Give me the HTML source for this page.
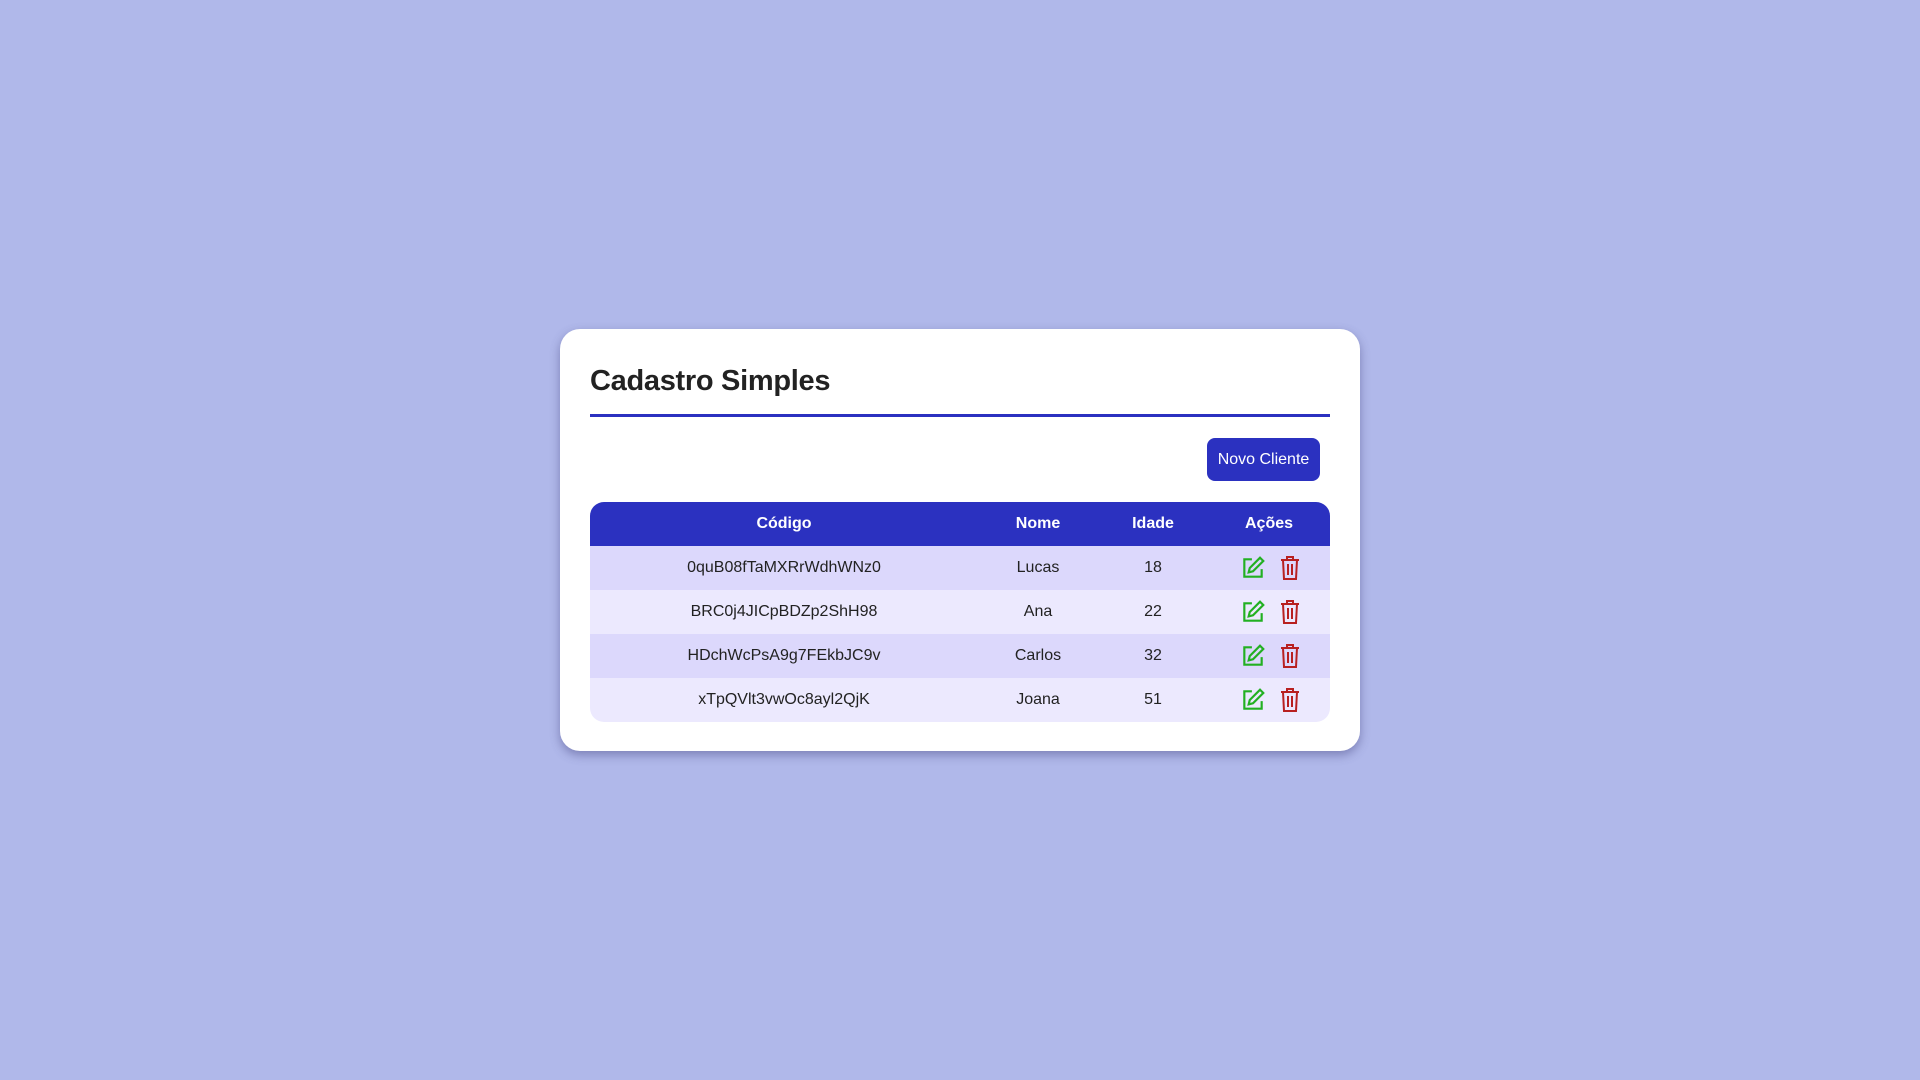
<!DOCTYPE html>
<html><head><meta charset="utf-8"><style>
html,body{margin:0;height:100%;}
body{background:#b0b8ea;font-family:"Liberation Sans",sans-serif;width:1920px;height:1080px;position:relative;overflow:hidden;}
.card{position:absolute;left:560px;top:329px;width:800px;height:422px;background:#fff;border-radius:20px;box-shadow:0 4px 10px rgba(60,60,120,.45);box-sizing:border-box;padding:0 30px;}
h1{margin:0;position:absolute;left:30px;top:36px;font-size:29px;font-weight:bold;color:#222;letter-spacing:-0.3px;}
.line{position:absolute;left:30px;right:30px;top:85px;height:3px;background:#2b31c0;}
.btn{position:absolute;right:40px;top:109px;width:113px;height:43px;background:#2b31c0;color:#fff;border-radius:8px;font-size:16px;display:flex;align-items:center;justify-content:center;}
table{position:absolute;left:30px;top:173px;width:740px;border-collapse:collapse;border-radius:14px;overflow:hidden;}
th{background:#2b31c0;color:#fff;font-size:16px;font-weight:bold;height:44px;padding:0;}
td{height:44px;text-align:center;font-size:16px;color:#222;padding:0;}
tr.o td{background:#dcd8fc;}tr.e td{background:#ece9fe;}
td.a{padding-left:4px;}
svg{vertical-align:middle;}
</style></head><body>
<div class="card">
<h1>Cadastro Simples</h1>
<div class="line"></div>
<div class="btn">Novo Cliente</div>
<table>
<tr><th style="width:388px">Código</th><th style="width:120px">Nome</th><th style="width:110px">Idade</th><th style="width:122px">Ações</th></tr>
<tr class="o"><td>0quB08fTaMXRrWdhWNz0</td><td>Lucas</td><td>18</td><td class="a">ICONS</td></tr>
<tr class="e"><td>BRC0j4JICpBDZp2ShH98</td><td>Ana</td><td>22</td><td class="a">ICONS</td></tr>
<tr class="o"><td>HDchWcPsA9g7FEkbJC9v</td><td>Carlos</td><td>32</td><td class="a">ICONS</td></tr>
<tr class="e"><td>xTpQVlt3vwOc8ayl2QjK</td><td>Joana</td><td>51</td><td class="a">ICONS</td></tr>
</table>
</div>
<script>
var ic='<svg width="26" height="26" viewBox="0 0 24 24" fill="none" stroke="#22b022" stroke-width="2"><path d="M11 4H4v16h16v-7"/><path d="M18.5 2.5l3 3L12 15l-4 1 1-4z"/></svg><span style="display:inline-block;width:12px"></span><svg width="24" height="26" viewBox="0 0 24 26" fill="none" stroke="#b82020" stroke-width="2"><path d="M3 5h18M9 5V2h6v3M5 5l1 19h12l1-19M10 9v11M14 9v11"/></svg>';
document.querySelectorAll('td').forEach(function(t){if(t.textContent=='ICONS')t.innerHTML=ic;});
</script>
</body></html>
